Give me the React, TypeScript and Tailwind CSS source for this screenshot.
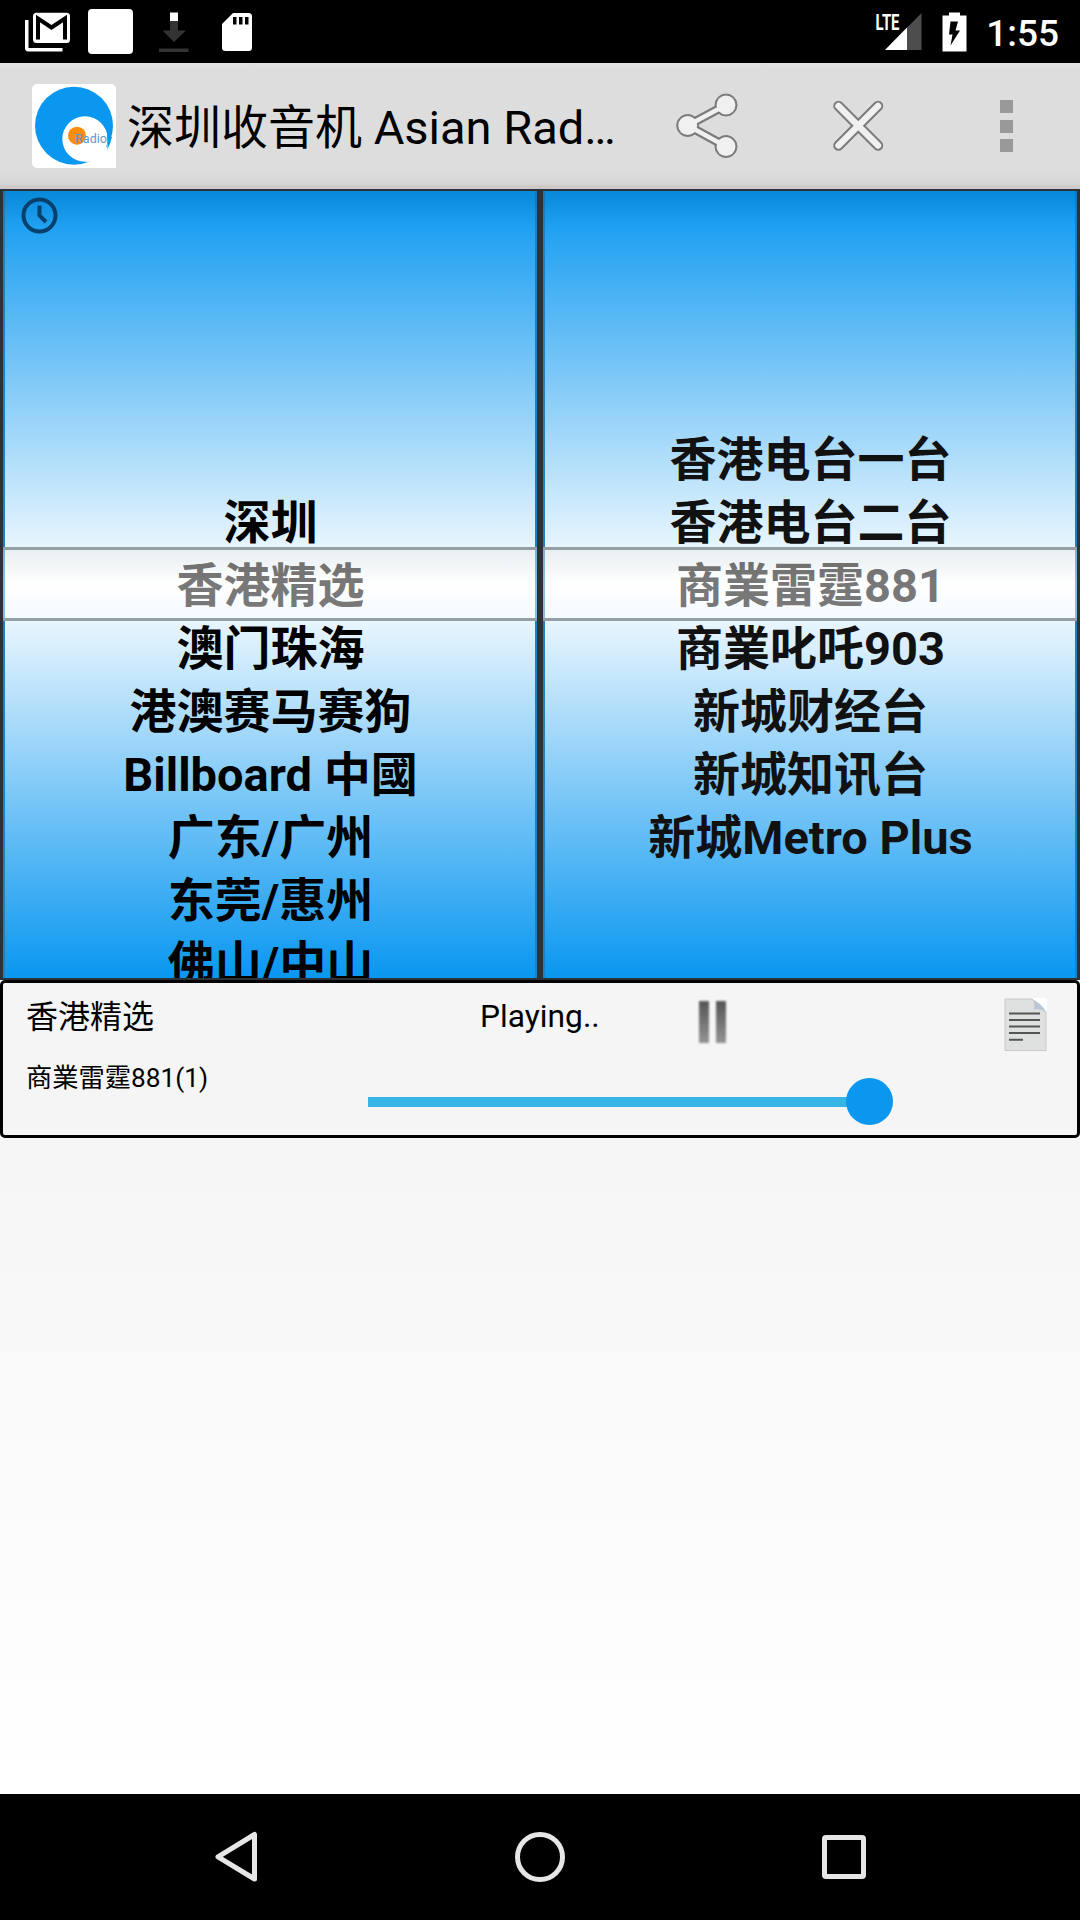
import React from 'react'

interface WheelProps {
  before: string[]
  current: string
  after: string[]
  textClass: string
  showHistory?: boolean
}

const StatusBar: React.FC = () => (
  <div className="flex h-[63px] shrink-0 items-center bg-black text-white">
    <svg className="ml-[25px] h-[40px] w-[45px]" viewBox="0 0 45 40">
      <path d="M1.7 8v28.2a1.5 1.5 0 0 0 1.5 1.5H37.5" fill="none" stroke="#fff" strokeWidth="3.6" />
      <rect x="8" y="0.7" width="37" height="30.3" rx="3.5" fill="#fff" />
      <path d="M13 27.5V6.5L26.5 15.5L40 6.5V27.5" fill="none" stroke="#000" strokeWidth="4" />
    </svg>
    <div className="ml-[18px] h-[45px] w-[45px] rounded bg-white" />
    <svg className="ml-[26px] h-[40px] w-[30px]" viewBox="0 0 30 40">
      <path d="M11 0.5h8v8.5h-8z" fill="#fff" />
      <path d="M11 9h8v9.500h8L15 30 3.500 18.500H11zM0 36.500h29.500v3.500H0z" fill="#333" />
    </svg>
    <svg className="ml-[32px] h-[40px] w-[32px]" viewBox="0 0 32 40">
      <path d="M12 1h15.5a3.5 3.5 0 0 1 3.5 3.5v31a3.5 3.5 0 0 1-3.5 3.5H4.5a3.5 3.5 0 0 1-3.5-3.5V12z" fill="#fff" />
      <path d="M12 5h3.5v7.5H12zM18 5h3.5v7.5H18zM24 5h3.5v7.5H24z" fill="#000" />
    </svg>
    <div className="flex-1" />
    <svg className="h-[40px] w-[47px] overflow-visible" viewBox="0 0 47 40">
      <path d="M46.5 1v37H10z" fill="#4d4d4d" />
      <path d="M32 15.5V38H10z" fill="#fff" />
      <text x="0.5" y="17.5" textLength="24" lengthAdjust="spacingAndGlyphs" className="fill-white font-['Roboto'] text-[22px] font-bold">LTE</text>
    </svg>
    <svg className="ml-[20px] h-[40px] w-[25px]" viewBox="0 0 25 40">
      <path d="M7 0.5h11v3h6.5v36H0.5v-36H7z" fill="#fff" />
      <path d="M8.5 9.5H16L13.5 18.5H18L8.5 33.5L10.5 22.5H7z" fill="#000" />
    </svg>
    <span className="mt-[3px] mr-[21px] ml-[18px] w-[74px] text-right text-[37px] leading-none font-medium">1:55</span>
  </div>
)

const Logo: React.FC = () => (
  <svg className="ml-8 h-[84px] w-[84px] shrink-0" viewBox="0 0 84 84">
    <rect width="84" height="84" rx="5" fill="#fff" />
    <circle cx="42" cy="41.7" r="39" fill="#0997f0" />
    <circle cx="53" cy="55" r="22.7" fill="#fff" />
    <path d="M53 77.7Q58 78 62 76.5L68 84H84V52L75.7 55Q76 61 74 66z" fill="#fff" />
    <path d="M75.5 60Q76 64 74.5 67Q78 61 80 53L75 50z" fill="#0997f0" />
    <circle cx="45" cy="51.7" r="9" fill="#fb8c0e" />
    <text x="43" y="59" textLength="32" className="fill-[#5a96d8] font-['Roboto'] text-[12.5px]">Radio</text>
  </svg>
)

const ActionBar: React.FC = () => (
  <div className="flex h-[126px] shrink-0 items-center bg-[linear-gradient(#e2e2e2,#dddddd_8px,#dddddd_108px,#d6d6d8_121px,#cfc8c8_123px)]">
    <Logo />
    <h1 className="mt-[4px] ml-[11px] w-[501px] text-[47px] leading-[64px] whitespace-nowrap text-black">深圳收音机 Asian Rad…</h1>
    {/* Share */}
    <svg className="ml-[46px] h-[70px] w-[66px]" viewBox="0 0 66 70">
      <g fill="#7b7b7b" stroke="#7b7b7b">
        <path d="M52 14L13.7 34.5L52 55.5" fill="none" strokeWidth="9" />
        <circle cx="13.7" cy="34.5" r="11" />
        <circle cx="52" cy="14" r="11" />
        <circle cx="52" cy="55.5" r="11" />
      </g>
      <g fill="#f0f0f0">
        <path d="M52 14L13.7 34.5L52 55.5" fill="none" stroke="#f0f0f0" strokeWidth="4.5" />
        <circle cx="13.7" cy="34.5" r="9.4" />
        <circle cx="52" cy="14" r="9.4" />
        <circle cx="52" cy="55.5" r="9.4" />
      </g>
    </svg>
    {/* Close */}
    <svg className="ml-[92px] h-[54px] w-[52px]" viewBox="0 0 52 54" strokeLinecap="round">
      <path d="M6.5 7L46 46.5M46 7L6.5 46.5" stroke="#7b7b7b" strokeWidth="10.5" />
      <path d="M6.5 7L46 46.5M46 7L6.5 46.5" stroke="#f0f0f0" strokeWidth="6.5" />
    </svg>
    {/* Overflow */}
    <div className="ml-[116px] flex flex-col gap-[6.5px]">
      <div className="h-[13px] w-[13px] bg-[#999]" />
      <div className="h-[13px] w-[13px] bg-[#999]" />
      <div className="h-[13px] w-[13px] bg-[#999]" />
    </div>
  </div>
)

const Wheel: React.FC<WheelProps> = ({ before, current, after, textClass, showHistory }) => (
  <div className="relative h-full flex-1 overflow-hidden border-x-[3px] border-y-2 border-[#2c3338] bg-[linear-gradient(#0997f0,#ffffff_50%,#0997f0)] text-center text-[47px] leading-[63px] font-bold">
    <div className="absolute inset-0 border-x-2 border-[#1b82c4]" />
    <div className="absolute inset-x-0 top-0 h-[36px] bg-linear-to-b from-black/10 to-transparent" />
    {showHistory && (
      <svg className="absolute top-[6px] left-[17px] h-[38px] w-[38px]" viewBox="0 0 38 38" fill="none" stroke="#07416b" strokeWidth="4">
        <circle cx="19.5" cy="18.5" r="16" />
        <path d="M19.5 8.5v10l6.5 6.5" />
      </svg>
    )}
    <div className="grid h-full grid-rows-[1fr_63px_1fr] pt-[2px] pl-px">
      <div className={`relative flex min-h-0 flex-col justify-end ${textClass}`}>
        {before.map((name) => <p key={name}>{name}</p>)}
      </div>
      <p className="relative text-black">{current}</p>
      <div className={`relative min-h-0 ${textClass}`}>
        {after.map((name) => <p key={name}>{name}</p>)}
      </div>
    </div>
    {/* Selection band */}
    <div className="absolute -inset-x-0.5 top-[356px] h-[74px] border-y-[3px] border-[#95a0a5] bg-[linear-gradient(#e6e6e478,#ffffff78_50%,#ffffff78)]" />
  </div>
)

const Player: React.FC = () => (
  <div className="flex h-[158px] shrink-0 flex-col rounded-[5px] border-[3px] border-black bg-[#f5f5f5] text-black">
    <div className="flex h-[70px]">
      <p className="mt-[11px] ml-[23px] w-[454px] text-[32px] leading-[46px]">香港精选</p>
      <p className="mt-[12px] w-[219px] text-[31.75px] leading-[44px]">Playing..</p>
      <div className="mt-[18px] flex h-[42px] w-[305px] gap-[7px]">
        <div className="h-full w-[10px] bg-linear-to-b from-[#555] to-[#949494] blur-[1px]" />
        <div className="h-full w-[10px] bg-linear-to-b from-[#555] to-[#949494] blur-[1px]" />
      </div>
      <svg className="mt-[15px] h-[54px] w-[44px]" viewBox="0 0 44 54">
        <path d="M1 1H28L42 14V52.5H1z" fill="#dfe0e0" stroke="#c9cbcb" />
        <path d="M28 0H43V14z" fill="#fff" />
        <path d="M27 0.5Q32 4 30 11.5Q37 10 42 14.5Q39 6 27 0.5z" fill="#bcc7cf" />
        <path d="M5 15.5H36M5 22H36M5 28.5H36M5 35H36M5 41.7H19" stroke="#555" strokeWidth="2" />
      </svg>
    </div>
    <div className="flex h-[82px]">
      <p className="mt-[5px] ml-[23px] w-[342px] text-[26.25px] leading-[40px]">商業雷霆881(1)</p>
      <div className="mt-[25px] flex h-[47px] w-[525px] items-center">
        <div className="h-[10px] w-[480px] bg-[#36b4e4]" />
        <div className="-ml-[2px] h-[47px] w-[47px] rounded-full bg-[#0997f0]" />
      </div>
    </div>
  </div>
)

const NavBar: React.FC = () => (
  <div className="flex h-[126px] shrink-0 items-center bg-black">
    <svg className="ml-[214px] h-[52px] w-[44px]" viewBox="0 0 44 52" fill="none" stroke="#e6e6e6" strokeWidth="5" strokeLinejoin="round">
      <path d="M40.5 3.5V48L4 25.8z" />
    </svg>
    <div className="ml-[257px] h-[50px] w-[50px] rounded-full border-[5.5px] border-[#e6e6e6]" />
    <div className="ml-[257px] h-[44px] w-[44px] rounded-[4px] border-[5px] border-[#e6e6e6]" />
  </div>
)

export default function App() {
  return (
    <div className="flex h-[1920px] w-[1080px] flex-col overflow-hidden bg-white font-['Roboto','Noto_Sans_CJK_SC',sans-serif]">
      <StatusBar />
      <ActionBar />
      <div className="flex h-[791px] shrink-0 bg-[#2c3338]">
        <Wheel
          before={['深圳']}
          current="香港精选"
          after={['澳门珠海', '港澳赛马赛狗', 'Billboard 中國', '广东/广州', '东莞/惠州', '佛山/中山']}
          textClass="text-black"
          showHistory
        />
        <Wheel
          before={['香港电台一台', '香港电台二台']}
          current="商業雷霆881"
          after={['商業叱吒903', '新城财经台', '新城知讯台', '新城Metro Plus']}
          textClass="text-[#111]"
        />
      </div>
      <Player />
      <div className="flex-1 bg-linear-to-b from-[#f6f6f6] to-white" />
      <NavBar />
    </div>
  )
}
